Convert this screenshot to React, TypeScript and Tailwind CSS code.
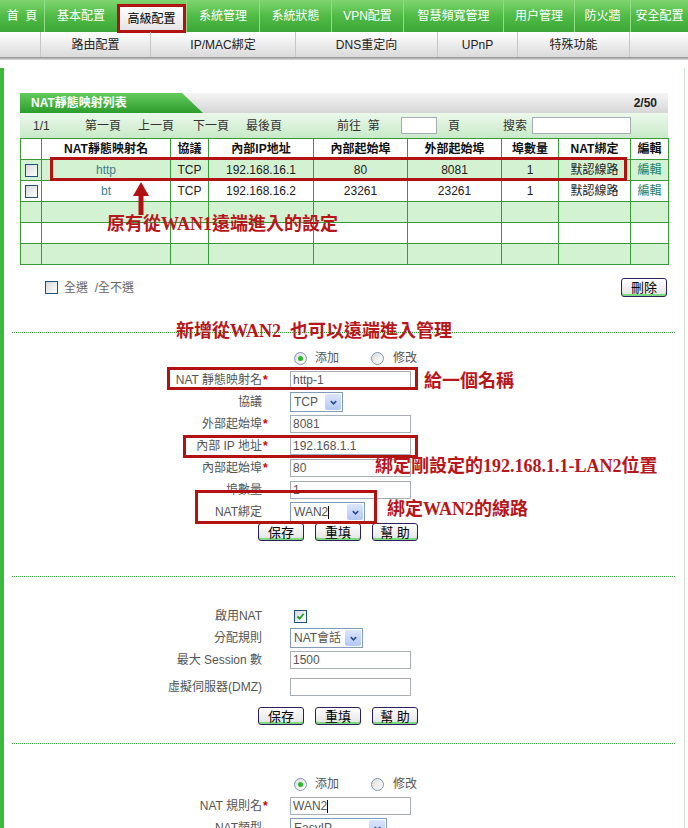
import React from 'react';

const navItems = [
  { label: '首\u00a0\u00a0頁', w: 'w-[44px]' },
  { label: '基本配置', w: 'w-[73px]' },
  { label: '高級配置', w: 'w-[69px]', active: true },
  { label: '系統管理', w: 'w-[73px]' },
  { label: '系統狀態', w: 'w-[72px]' },
  { label: 'VPN配置', w: 'w-[72px]' },
  { label: '智慧頻寬管理', w: 'w-[100px]' },
  { label: '用户管理', w: 'w-[71px]' },
  { label: '防火牆', w: 'w-[56px]' },
  { label: '安全配置', w: 'w-[58px]' },
];

const subItems = [
  { label: '', w: 'w-[40px]' },
  { label: '路由配置', w: 'w-[110px]' },
  { label: 'IP/MAC綁定', w: 'w-[145px]' },
  { label: 'DNS重定向', w: 'w-[142px]' },
  { label: 'UPnP', w: 'w-[80px]' },
  { label: '特殊功能', w: 'w-[112px]' },
  { label: '', w: 'w-[59px]' },
];

const rows = [
  { name: 'http', ip: '192.168.16.1', inner: '80', outer: '8081' },
  { name: 'bt', ip: '192.168.16.2', inner: '23261', outer: '23261' },
];

function Checkbox({ checked = false }: { checked?: boolean }) {
  return (
    <span className="inline-flex w-[13px] h-[13px] border border-[#1c5180] bg-gradient-to-br from-[#d8d8d8] to-white items-center justify-center">
      {checked && (
        <svg viewBox="0 0 10 10" className="w-[9px] h-[9px]">
          <path d="M1.5 5 L4 7.5 L8.5 2" fill="none" stroke="#21a121" strokeWidth={2} />
        </svg>
      )}
    </span>
  );
}

function Radio({ checked = false }: { checked?: boolean }) {
  return (
    <span className="inline-flex w-[13px] h-[13px] rounded-full border border-[#8196ad] bg-gradient-to-br from-[#dcdcdc] to-white items-center justify-center">
      {checked && <span className="w-[5px] h-[5px] rounded-full bg-[#2db52d]" />}
    </span>
  );
}

function Select({ value, w, cursor = false }: { value: string; w: string; cursor?: boolean }) {
  return (
    <div className={`${w} h-[20px] border border-[#7f9db9] bg-white flex items-center text-[#555]`}>
      <span className="pl-[3px]">{value}</span>
      {cursor && <span className="w-px h-[13px] bg-black" />}
      <span className="ml-auto mr-px w-[16px] h-[16px] rounded-[2px] bg-gradient-to-b from-[#dbe6fd] to-[#b2c8f4] flex items-center justify-center">
        <svg viewBox="0 0 10 10" className="w-[9px] h-[9px]">
          <path d="M2 3.5 L5 6.5 L8 3.5" fill="none" stroke="#2b4d8e" strokeWidth={1.8} />
        </svg>
      </span>
    </div>
  );
}

function TextInput({ value = '', cursor = false }: { value?: string; cursor?: boolean }) {
  return (
    <div className="w-[121px] h-[18px] border border-[#a7adb5] bg-white flex items-center pl-[2px] text-[#555]">
      {value}
      {cursor && <span className="w-px h-[13px] bg-black" />}
    </div>
  );
}

function Btn({ label }: { label: string }) {
  return (
    <button className="w-[46px] h-[18px] border border-[#2c1f5e] rounded-[3px] bg-gradient-to-b from-white to-[#e2e2e2] shadow-[inset_0_-2px_0_#7dd97d] text-[13px] leading-none text-black">
      {label}
    </button>
  );
}

function FormRow({ label, req = false, children }: { label: string; req?: boolean; children: React.ReactNode }) {
  return (
    <div className="flex h-[22px] items-center">
      <div className="w-[267px] flex justify-end text-[#555]">
        <span>{label}</span>
        <span className="w-[9px] pl-[1px] text-[#d40000] font-bold">{req ? '*' : ''}</span>
      </div>
      <div className="ml-[19px] flex items-center">{children}</div>
    </div>
  );
}

function Dotted() {
  return <div className="ml-[8px] w-[663px] border-t border-dotted border-[#3a9a3a]" />;
}

function Buttons() {
  return (
    <div className="flex h-[18px] ml-[254px] gap-[11px]">
      <Btn label="保存" />
      <Btn label="重填" />
      <Btn label="幫 助" />
    </div>
  );
}

const note = "absolute font-['Liberation_Serif','Noto_Sans_CJK_TC',serif] font-bold text-[#b7161a] leading-none whitespace-nowrap";

export default function App() {
  return (
    <div className="relative w-[688px] h-[828px] overflow-hidden bg-white text-[12px] font-['Liberation_Sans','Noto_Sans_CJK_TC',sans-serif]">
      {/* top menu */}
      <div className="flex h-[32px] bg-gradient-to-b from-[#7fd56e] via-[#50bb46] to-[#3ba737] text-white">
        {navItems.map((it, i) =>
          it.active ? (
            <div
              key={i}
              className={`${it.w} mt-[4px] h-[29px] border-[3px] border-[#b31212] bg-gradient-to-b from-white to-[#e4e4e4] text-black flex items-center justify-center`}
            >
              {it.label}
            </div>
          ) : (
            <div
              key={i}
              className={`${it.w} shrink-0 flex items-center justify-center ${i > 0 ? 'border-l border-[#92db88]' : ''}`}
            >
              {it.label}
            </div>
          )
        )}
      </div>

      {/* sub menu */}
      <div className="flex h-[25px] bg-gradient-to-b from-white to-[#dadada] text-[#222]">
        {subItems.map((it, i) => (
          <div
            key={i}
            className={`${it.w} shrink-0 flex items-center justify-center ${i > 0 ? 'border-l border-[#c6c6c6]' : ''}`}
          >
            {it.label}
          </div>
        ))}
      </div>
      <div className="h-[3px] bg-gradient-to-b from-[#8f8f8f] to-[#dedede]" />
      <div className="h-[8px]" />

      <div className="flex h-[760px]">
        <div className="w-[4px] bg-[#3dba3d]" />
        <div className="flex-1 border-r border-[#cfe3cf] mr-[3px]">
          {/* list panel */}
          <div className="ml-[16px] mt-[25px] w-[648px]">
            <div className="relative h-[20px] bg-gradient-to-b from-[#f5f5f5] to-[#d6d6d6] flex items-center justify-end pr-[11px] font-bold text-[#222]">
              <div className="absolute left-0 top-0 h-[20px] w-[183px] bg-gradient-to-b from-[#62cc5c] to-[#2c9d2c] [clip-path:polygon(0_0,162px_0,183px_100%,0_100%)] text-white flex items-center pl-[11px]">
                NAT靜態映射列表
              </div>
              2/50
            </div>
            <div className="h-[25px] bg-gradient-to-b from-[#ebf8eb] to-[#c8eac8] flex items-center text-[#333]">
              <span className="w-[65px] pl-[13px]">1/1</span>
              <span className="w-[53px]">第一頁</span>
              <span className="w-[55px]">上一頁</span>
              <span className="w-[53px]">下一頁</span>
              <span className="w-[91px]">最後頁</span>
              <span className="w-[64px]">前往&nbsp;&nbsp;第</span>
              <span className="w-[36px] h-[17px] border border-[#a7adb5] bg-white" />
              <span className="w-[66px] pl-[11px]">頁</span>
              <span className="w-[29px]">搜索</span>
              <span className="w-[99px] h-[17px] border border-[#a7adb5] bg-white" />
            </div>
            <table className="w-[648px] table-fixed border-collapse">
              <colgroup>
                <col className="w-[21px]" />
                <col className="w-[129px]" />
                <col className="w-[38px]" />
                <col className="w-[105px]" />
                <col className="w-[94px]" />
                <col className="w-[94px]" />
                <col className="w-[57px]" />
                <col className="w-[72px]" />
                <col className="w-[38px]" />
              </colgroup>
              <tbody>
                <tr className="h-[21px] bg-white font-bold text-[#111]">
                  <td className="border border-[#3a9a3a]" />
                  <td className="border border-[#3a9a3a] text-center">NAT靜態映射名</td>
                  <td className="border border-[#3a9a3a] text-center">協議</td>
                  <td className="border border-[#3a9a3a] text-center">內部IP地址</td>
                  <td className="border border-[#3a9a3a] text-center">內部起始埠</td>
                  <td className="border border-[#3a9a3a] text-center">外部起始埠</td>
                  <td className="border border-[#3a9a3a] text-center">埠數量</td>
                  <td className="border border-[#3a9a3a] text-center">NAT綁定</td>
                  <td className="border border-[#3a9a3a] text-center">編輯</td>
                </tr>
                {rows.map((r, i) => (
                  <tr key={r.name} className={`h-[21px] text-[#222] ${i === 0 ? 'bg-[#d2f2d2]' : 'bg-white'}`}>
                    <td className="border border-[#3a9a3a] text-center">
                      <span className="inline-flex align-middle"><Checkbox /></span>
                    </td>
                    <td className="border border-[#3a9a3a] text-center text-[#3d7f8e]">{r.name}</td>
                    <td className="border border-[#3a9a3a] text-center">TCP</td>
                    <td className="border border-[#3a9a3a] text-center">{r.ip}</td>
                    <td className="border border-[#3a9a3a] text-center">{r.inner}</td>
                    <td className="border border-[#3a9a3a] text-center">{r.outer}</td>
                    <td className="border border-[#3a9a3a] text-center">1</td>
                    <td className="border border-[#3a9a3a] text-center">默認線路</td>
                    <td className="border border-[#3a9a3a] text-center text-[#17806e]">編輯</td>
                  </tr>
                ))}
                {[0, 1, 2].map((k) => (
                  <tr key={k} className={`h-[21px] ${k === 1 ? 'bg-white' : 'bg-[#d2f2d2]'}`}>
                    {[0, 1, 2, 3, 4, 5, 6, 7, 8].map((c) => (
                      <td key={c} className="border border-[#3a9a3a]" />
                    ))}
                  </tr>
                ))}
              </tbody>
            </table>
            <div className="mt-[13px] h-[19px] flex items-center">
              <span className="ml-[25px] flex"><Checkbox /></span>
              <span className="ml-[6px] text-[#666]">全選&nbsp;&nbsp;/全不選</span>
              <button className="ml-auto mr-px w-[46px] h-[19px] border border-[#2c1f5e] rounded-[3px] bg-gradient-to-b from-white to-[#e2e2e2] shadow-[inset_0_-2px_0_#7dd97d] text-[13px] leading-none text-black">
                刪除
              </button>
            </div>
          </div>

          <div className="mt-[35px]"><Dotted /></div>

          {/* section 1 */}
          <div className="mt-[14px]">
            <FormRow label="">
              <span className="ml-[4px] flex"><Radio checked /></span>
              <span className="ml-[8px] text-[#555]">添加</span>
              <span className="ml-[32px] flex"><Radio /></span>
              <span className="ml-[9px] text-[#555]">修改</span>
            </FormRow>
            <FormRow label="NAT 靜態映射名" req><TextInput value="http-1" /></FormRow>
            <FormRow label="協議"><Select value="TCP" w="w-[53px]" /></FormRow>
            <FormRow label="外部起始埠" req><TextInput value="8081" /></FormRow>
            <FormRow label="內部  IP 地址" req><TextInput value="192.168.1.1" /></FormRow>
            <FormRow label="內部起始埠" req><TextInput value="80" /></FormRow>
            <FormRow label="埠數量"><TextInput value="1" /></FormRow>
            <FormRow label="NAT綁定"><Select value="WAN2" w="w-[75px]" cursor /></FormRow>
            <Buttons />
          </div>

          <div className="mt-[35px]"><Dotted /></div>

          {/* section 2 */}
          <div className="mt-[28px]">
            <FormRow label="啟用NAT">
              <span className="ml-[4px] flex"><Checkbox checked /></span>
            </FormRow>
            <FormRow label="分配規則"><Select value="NAT會話" w="w-[73px]" /></FormRow>
            <FormRow label="最大  Session 數"><TextInput value="1500" /></FormRow>
            <div className="mt-[5px]">
              <FormRow label="虛擬伺服器(DMZ)"><TextInput /></FormRow>
            </div>
            <div className="mt-[9px]"><Buttons /></div>
          </div>

          <div className="mt-[18px]"><Dotted /></div>

          {/* section 3 */}
          <div className="mt-[29px]">
            <FormRow label="">
              <span className="ml-[4px] flex"><Radio checked /></span>
              <span className="ml-[8px] text-[#555]">添加</span>
              <span className="ml-[32px] flex"><Radio /></span>
              <span className="ml-[9px] text-[#555]">修改</span>
            </FormRow>
            <FormRow label="NAT 規則名" req><TextInput value="WAN2" cursor /></FormRow>
            <FormRow label="NAT類型"><Select value="EasyIP" w="w-[97px]" /></FormRow>
          </div>
        </div>
      </div>

      {/* annotations */}
      <div className="absolute left-[50px] top-[157px] w-[577px] h-[24px] border-[3px] border-[#b31212]" />
      <svg className="absolute left-[132px] top-[182px]" width="18" height="33" viewBox="0 0 18 33">
        <polygon points="9,0 17,14 1,14" fill="#b31212" />
        <rect x="6.5" y="13" width="5" height="20" fill="#b31212" />
      </svg>
      <div className={`${note} left-[107px] top-[215px] text-[18px]`}>原有從WAN1遠端進入的設定</div>
      <div className={`${note} left-[176px] top-[322px] text-[18px]`}>新增從WAN2&nbsp;&nbsp;也可以遠端進入管理</div>
      <div className="absolute left-[167px] top-[367px] w-[251px] h-[23px] border-[3px] border-[#b31212]" />
      <div className={`${note} left-[424px] top-[372px] text-[18px]`}>給一個名稱</div>
      <div className="absolute left-[183px] top-[435px] w-[235px] h-[23px] border-[3px] border-[#b31212]" />
      <div className={`${note} left-[375px] top-[457px] text-[18px]`}>綁定剛設定的192.168.1.1-LAN2位置</div>
      <div className="absolute left-[195px] top-[490px] w-[182px] h-[34px] border-[3px] border-[#b31212]" />
      <div className={`${note} left-[387px] top-[500px] text-[18px]`}>綁定WAN2的線路</div>
    </div>
  );
}
